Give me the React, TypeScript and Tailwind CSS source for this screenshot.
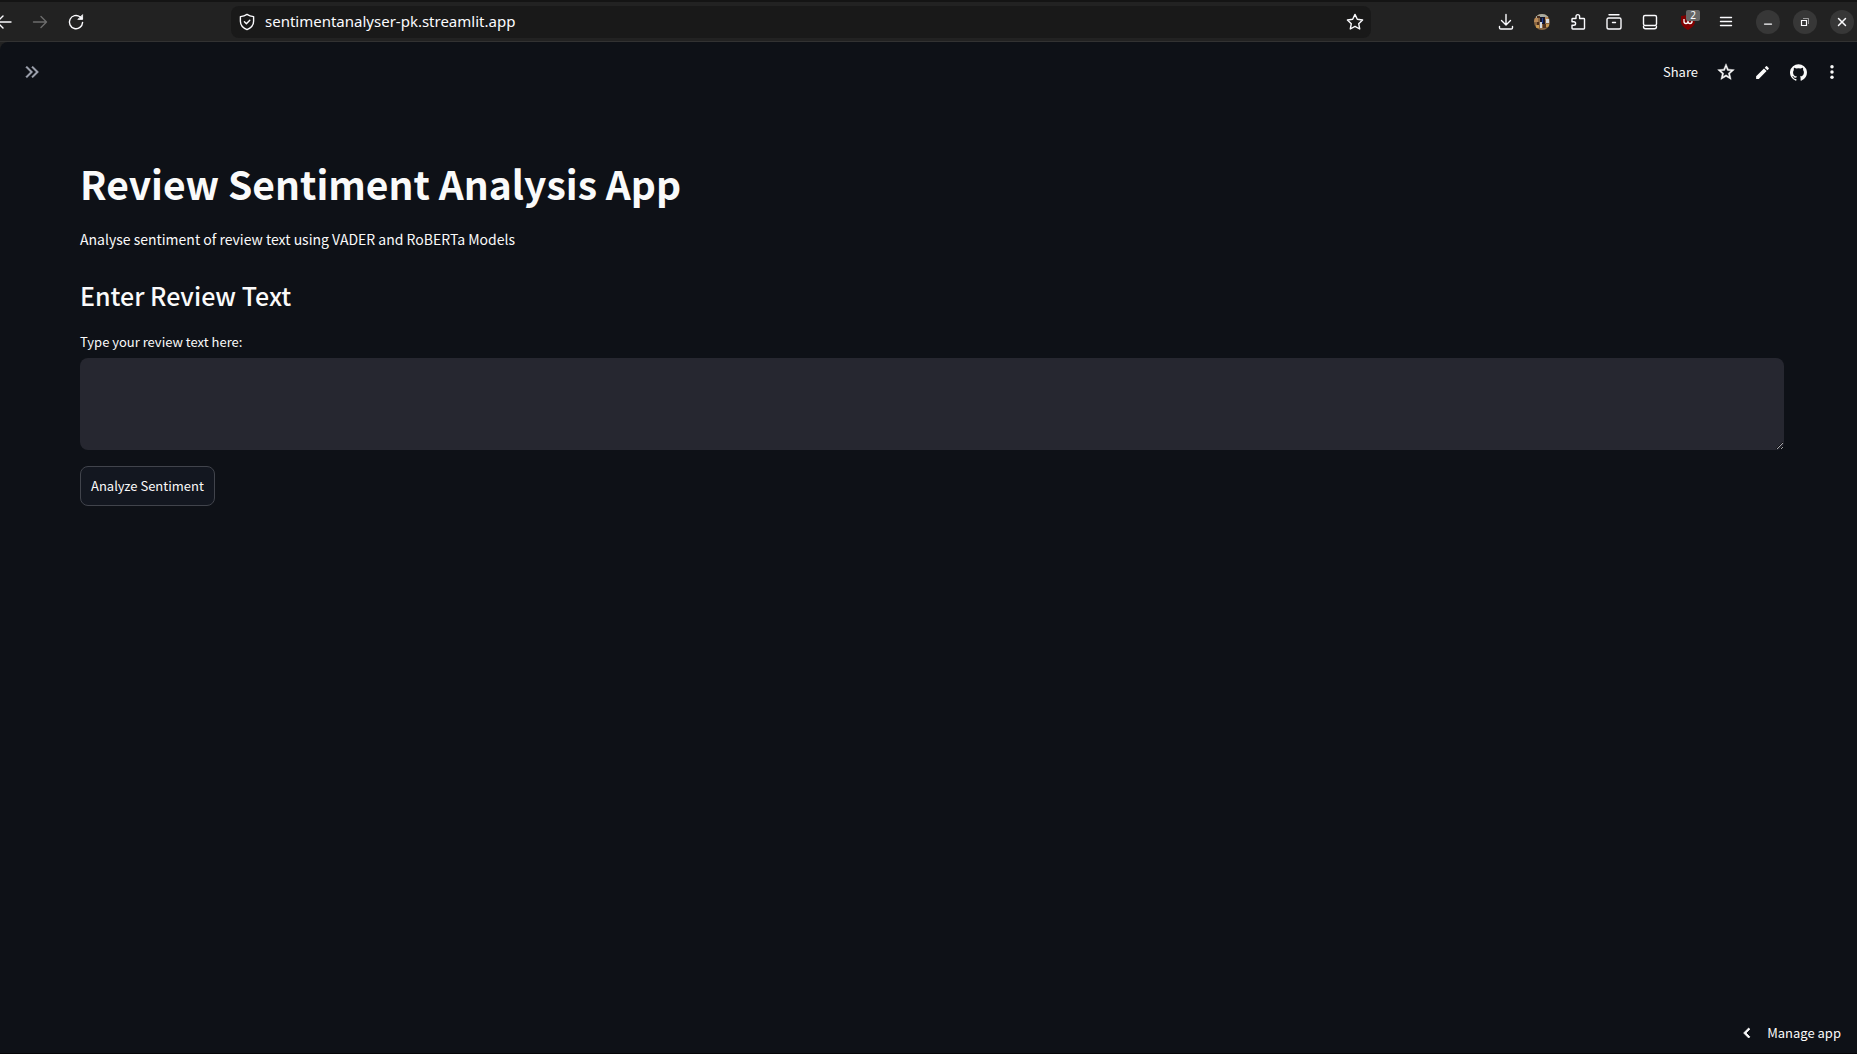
import { clsx } from 'clsx';
import { useState, type ReactNode } from 'react';
import { Minus, X } from 'lucide-react';

interface IconProps {
  size?: number;
  children: ReactNode;
}

/** Thin outline icon on a 20px grid, used across the browser toolbar. */
function LineIcon({ size = 20, children }: IconProps) {
  return (
    <svg
      width={size}
      height={size}
      viewBox="0 0 20 20"
      fill="none"
      stroke="currentColor"
      strokeWidth="1.4"
      strokeLinecap="round"
      strokeLinejoin="round"
      aria-hidden="true"
    >
      {children}
    </svg>
  );
}

/** Solid icon on the 24px Material grid. */
function SolidIcon({ size = 20, children }: IconProps) {
  return (
    <svg width={size} height={size} viewBox="0 0 24 24" fill="currentColor" aria-hidden="true">
      {children}
    </svg>
  );
}

interface IconButtonProps {
  label: string;
  className?: string;
  children: ReactNode;
}

function IconButton({ label, className, children }: IconButtonProps) {
  return (
    <button
      type="button"
      aria-label={label}
      className={clsx('flex shrink-0 items-center justify-center', className)}
    >
      {children}
    </button>
  );
}

function ExtensionAvatar() {
  return (
    <svg width="16" height="16" viewBox="0 0 16 16" aria-hidden="true">
      <clipPath id="avatar">
        <circle cx="8" cy="8" r="8" />
      </clipPath>
      <g clipPath="url(#avatar)">
        <rect width="16" height="16" fill="#8a6844" />
        <path d="M2 0h12v4H2z" fill="#a9aba0" />
        <path d="M0 4h4v4H0zM11 3h3v3h-3z" fill="#b98a58" />
        <path d="M3 2h3v2H3zM3 8h2v3H3z" fill="#4a2c1c" />
        <path d="M6 3h5v7H6z" fill="#15172c" />
        <path d="M8 4h1v5H8z" fill="#1d3f96" />
        <path d="M6 8h2v6H6zM12 5h3v4h-3z" fill="#d5dade" />
        <path d="M9 10h3v4H9z" fill="#51331f" />
        <path d="M2 11h3v3H2zM12 10h3v3h-3z" fill="#c99a52" />
      </g>
    </svg>
  );
}

function BrowserToolbar() {
  return (
    <header className="flex h-[42px] items-center border-t-2 border-b border-t-[#141414] border-b-[#323232] bg-[#222222] pr-[3px] text-[#fbfbfe]">
      <nav className="flex w-[231px] shrink-0 items-center" aria-label="History">
        <IconButton label="Back" className="-ml-2 w-6">
          <LineIcon>
            <path d="M17 10H3M9 4l-6 6 6 6" />
          </LineIcon>
        </IconButton>
        <IconButton label="Forward" className="ml-3 w-6 text-[#6c6c6c]">
          <LineIcon>
            <path d="M3.5 10h13M11 4.5l5.5 5.5-5.5 5.5" />
          </LineIcon>
        </IconButton>
        <IconButton label="Reload" className="ml-3 w-6">
          <LineIcon>
            <path d="M16.6 10.4A6.6 6.6 0 1 1 14 4.8l2 1.6" />
            <path d="M16.6 3v4.4h-4.4z" fill="currentColor" strokeWidth="0.8" />
          </LineIcon>
        </IconButton>
      </nav>

      <div className="flex h-8 min-w-0 flex-1 items-center rounded-lg bg-[#191919] px-[6px]">
        <LineIcon>
          <path d="M10 2.4c2 1.4 4 2 6.6 2.2v4.6c0 3.8-2.4 6.6-6.6 8.4-4.2-1.8-6.6-4.6-6.6-8.4V4.6C6 4.4 8 3.8 10 2.4z" />
          <path d="M7.4 9.8l2 2 3.4-3.6" />
        </LineIcon>
        <input
          type="text"
          aria-label="Address"
          defaultValue="sentimentanalyser-pk.streamlit.app"
          className="ml-2 min-w-0 flex-1 bg-transparent font-['Noto_Sans',sans-serif] text-[15px] outline-none"
        />
        <IconButton label="Bookmark this page">
          <LineIcon>
            <path d="M10 2.4l2.3 4.9 5.3.7-3.9 3.7 1 5.3-4.7-2.6L5.3 17l1-5.3L2.4 8l5.3-.7z" />
          </LineIcon>
        </IconButton>
      </div>

      <div className="ml-[117px] flex shrink-0 items-center">
        <IconButton label="Downloads" className="w-9">
          <LineIcon>
            <path d="M10 2.5v10M5.5 8.5l4.5 4.5 4.5-4.5M3.5 14.5v1.2c0 .8.6 1.3 1.3 1.3h10.4c.7 0 1.3-.5 1.3-1.3v-1.2" />
          </LineIcon>
        </IconButton>
        <IconButton label="Account" className="w-9">
          <ExtensionAvatar />
        </IconButton>
        <IconButton label="Extensions" className="w-9">
          <LineIcon>
            <path d="M4 9V7.2c0-.4.3-.7.7-.7H8V4.4a1.8 1.8 0 0 1 3.6 0v2.1h4.2c.4 0 .7.3.7.7v9.1c0 .4-.3.7-.7.7H4.700a.7.7 0 0 1-.7-.7v-3h1.800a1.800 1.800 0 0 0 0-3.600H4z" />
          </LineIcon>
        </IconButton>
        <IconButton label="Archive" className="w-9">
          <LineIcon>
            <path d="M5 2.8h10M4.5 6h11c.8 0 1.5.7 1.5 1.5v7.7c0 1-.8 1.8-1.8 1.8H4.8c-1 0-1.8-.8-1.8-1.8V7.5C3 6.7 3.700 6 4.500 6zM8.500 10.500h3" />
          </LineIcon>
        </IconButton>
        <IconButton label="Sidebar" className="w-9">
          <LineIcon>
            <rect x="3.5" y="3.5" width="13" height="10" rx="1.5" />
            <path d="M3.5 14.5c0 1.4.8 2.2 2 2.2h9c1.2 0 2-.8 2-2.2" />
          </LineIcon>
        </IconButton>
        <IconButton label="uBlock Origin" className="relative ml-[2px] w-9">
          <svg width="16" height="16" viewBox="0 0 16 16" aria-hidden="true">
            <path d="M8 0c2 1.3 4.5 2 7 2v5c0 4-2.5 6.5-7 9-4.5-2.5-7-5-7-9V2c2.5 0 5-.7 7-2z" fill="#800000" />
            <path d="M4 5v2.5a2 2 0 0 0 4 0V5v2.5a2 2 0 1 0 2-2" fill="none" stroke="#fff" strokeWidth="1.3" />
          </svg>
          <span className="absolute -top-1 right-[6px] rounded-xs bg-[#666666] px-1 font-['Noto_Sans',sans-serif] text-[10px] leading-[11px]">
            2
          </span>
        </IconButton>
        <IconButton label="Menu" className="ml-[2px] w-9">
          <LineIcon>
            <path d="M4.5 5.5h11M4.5 9.5h11M4.5 13.5h11" />
          </LineIcon>
        </IconButton>
      </div>

      <div className="ml-3 flex shrink-0 gap-[13px]">
        <IconButton label="Minimize" className="size-6 rounded-full bg-[#373737] pt-1">
          <Minus size={12} strokeWidth={2.5} />
        </IconButton>
        <IconButton label="Restore" className="size-6 rounded-full bg-[#373737]">
          <svg width="10" height="10" viewBox="0 0 10 10" fill="none" stroke="currentColor" aria-hidden="true">
            <path d="M1.5 3.5h5v5h-5z" strokeWidth="1.2" />
            <path d="M3 1.5h5.5V7" opacity="0.5" />
          </svg>
        </IconButton>
        <IconButton label="Close" className="size-6 rounded-full bg-[#373737]">
          <X size={14} strokeWidth={2.5} />
        </IconButton>
      </div>
    </header>
  );
}

function AppHeader() {
  return (
    <div className="flex h-[60px] items-center justify-between pr-[9px] pl-[19px]">
      <IconButton label="Open sidebar" className="size-6 text-[#a3a8b4]">
        <SolidIcon>
          <path
            d="M5.7 6.4L7.1 5l7 7-7 7-1.4-1.4 5.6-5.6zM12.7 6.4L14.1 5l7 7-7 7-1.4-1.4 5.6-5.6z"
            stroke="currentColor"
            strokeWidth="0.5"
          />
        </SolidIcon>
      </IconButton>
      <div className="flex items-center">
        <button type="button" className="mr-[10px] text-[13px]">
          Share
        </button>
        <IconButton label="Favourite" className="w-9">
          <SolidIcon>
            <path
              d="M22 9.24l-7.19-.62L12 2 9.19 8.63 2 9.24l5.46 4.73L5.82 21 12 17.27 18.18 21l-1.63-7.03L22 9.24zM12 15.4l-3.76 2.27 1-4.28-3.32-2.88 4.38-.38L12 6.1l1.71 4.04 4.38.38-3.32 2.88 1 4.28L12 15.4z"
              stroke="currentColor"
              strokeWidth="0.5"
            />
          </SolidIcon>
        </IconButton>
        <IconButton label="Edit source" className="w-9">
          <SolidIcon size={17}>
            <path d="M3 17.25V21h3.75L17.81 9.94l-3.75-3.75L3 17.25zM20.71 7.04a1 1 0 0 0 0-1.41l-2.34-2.34a1 1 0 0 0-1.41 0l-1.83 1.83 3.75 3.75 1.83-1.83z" />
          </SolidIcon>
        </IconButton>
        <IconButton label="View on GitHub" className="w-9">
          <SolidIcon size={17}>
            <path d="M12 .3a12 12 0 0 0-3.8 23.38c.6.12.83-.26.83-.57L9 21.07c-3.34.72-4.04-1.61-4.04-1.61-.55-1.39-1.34-1.76-1.34-1.76-1.08-.74.09-.73.09-.73 1.2.09 1.83 1.24 1.83 1.24 1.08 1.83 2.81 1.3 3.5 1 .1-.78.42-1.31.76-1.61-2.67-.3-5.47-1.33-5.47-5.93 0-1.31.47-2.38 1.24-3.22-.14-.3-.54-1.52.1-3.18 0 0 1-.32 3.3 1.23a11.5 11.5 0 0 1 6 0c2.28-1.55 3.29-1.23 3.29-1.23.64 1.66.24 2.88.12 3.18a4.65 4.65 0 0 1 1.23 3.22c0 4.61-2.8 5.63-5.48 5.92.42.36.81 1.1.81 2.22l-.01 3.29c0 .31.2.69.82.57A12 12 0 0 0 12 .3" />
          </SolidIcon>
        </IconButton>
        <IconButton label="Main menu" className="w-8">
          <SolidIcon size={18}>
            <circle cx="12" cy="5" r="2.3" />
            <circle cx="12" cy="12" r="2.3" />
            <circle cx="12" cy="19" r="2.3" />
          </SolidIcon>
        </IconButton>
      </div>
    </div>
  );
}

export default function App() {
  const [review, setReview] = useState('');

  return (
    <div className="flex min-h-screen flex-col bg-[#222222]">
      <BrowserToolbar />
      <div className="flex flex-1 flex-col rounded-tl-lg border-b border-[#050507] bg-[#0e1117] font-['Noto_Sans_CJK_SC',sans-serif] text-[#fafafa]">
        <AppHeader />

        <main className="flex-1 pt-[51px] pr-[73px] pl-20">
          <h1 className="text-[39px] leading-[60px] font-bold">Review Sentiment Analysis App</h1>
          <p className="mt-[14px] text-[14px] leading-6">
            Analyse sentiment of review text using VADER and RoBERTa Models
          </p>
          <h2 className="mt-6 text-[25px] leading-10 font-medium">Enter Review Text</h2>
          <label htmlFor="review" className="mt-[17px] block text-[13px] leading-5">
            Type your review text here:
          </label>
          <textarea
            id="review"
            value={review}
            onChange={(e) => setReview(e.target.value)}
            className="mt-[6px] block h-[92px] w-full rounded-lg bg-[#262730] p-3 text-[14px] outline-none [color-scheme:dark]"
          />
          <button
            type="button"
            className="mt-4 h-10 rounded-lg border border-[#41444c] bg-[#131720] px-[10px] text-[13px]"
          >
            Analyze Sentiment
          </button>
        </main>

        <footer className="flex justify-end pr-4 pb-2">
          <button type="button" className="flex items-center gap-[10px] text-[13px] leading-6">
            <SolidIcon size={20}>
              <path d="M15.4 7.4L14 6l-6 6 6 6 1.4-1.4-4.6-4.6z" stroke="currentColor" />
            </SolidIcon>
            Manage app
          </button>
        </footer>
      </div>
    </div>
  );
}
